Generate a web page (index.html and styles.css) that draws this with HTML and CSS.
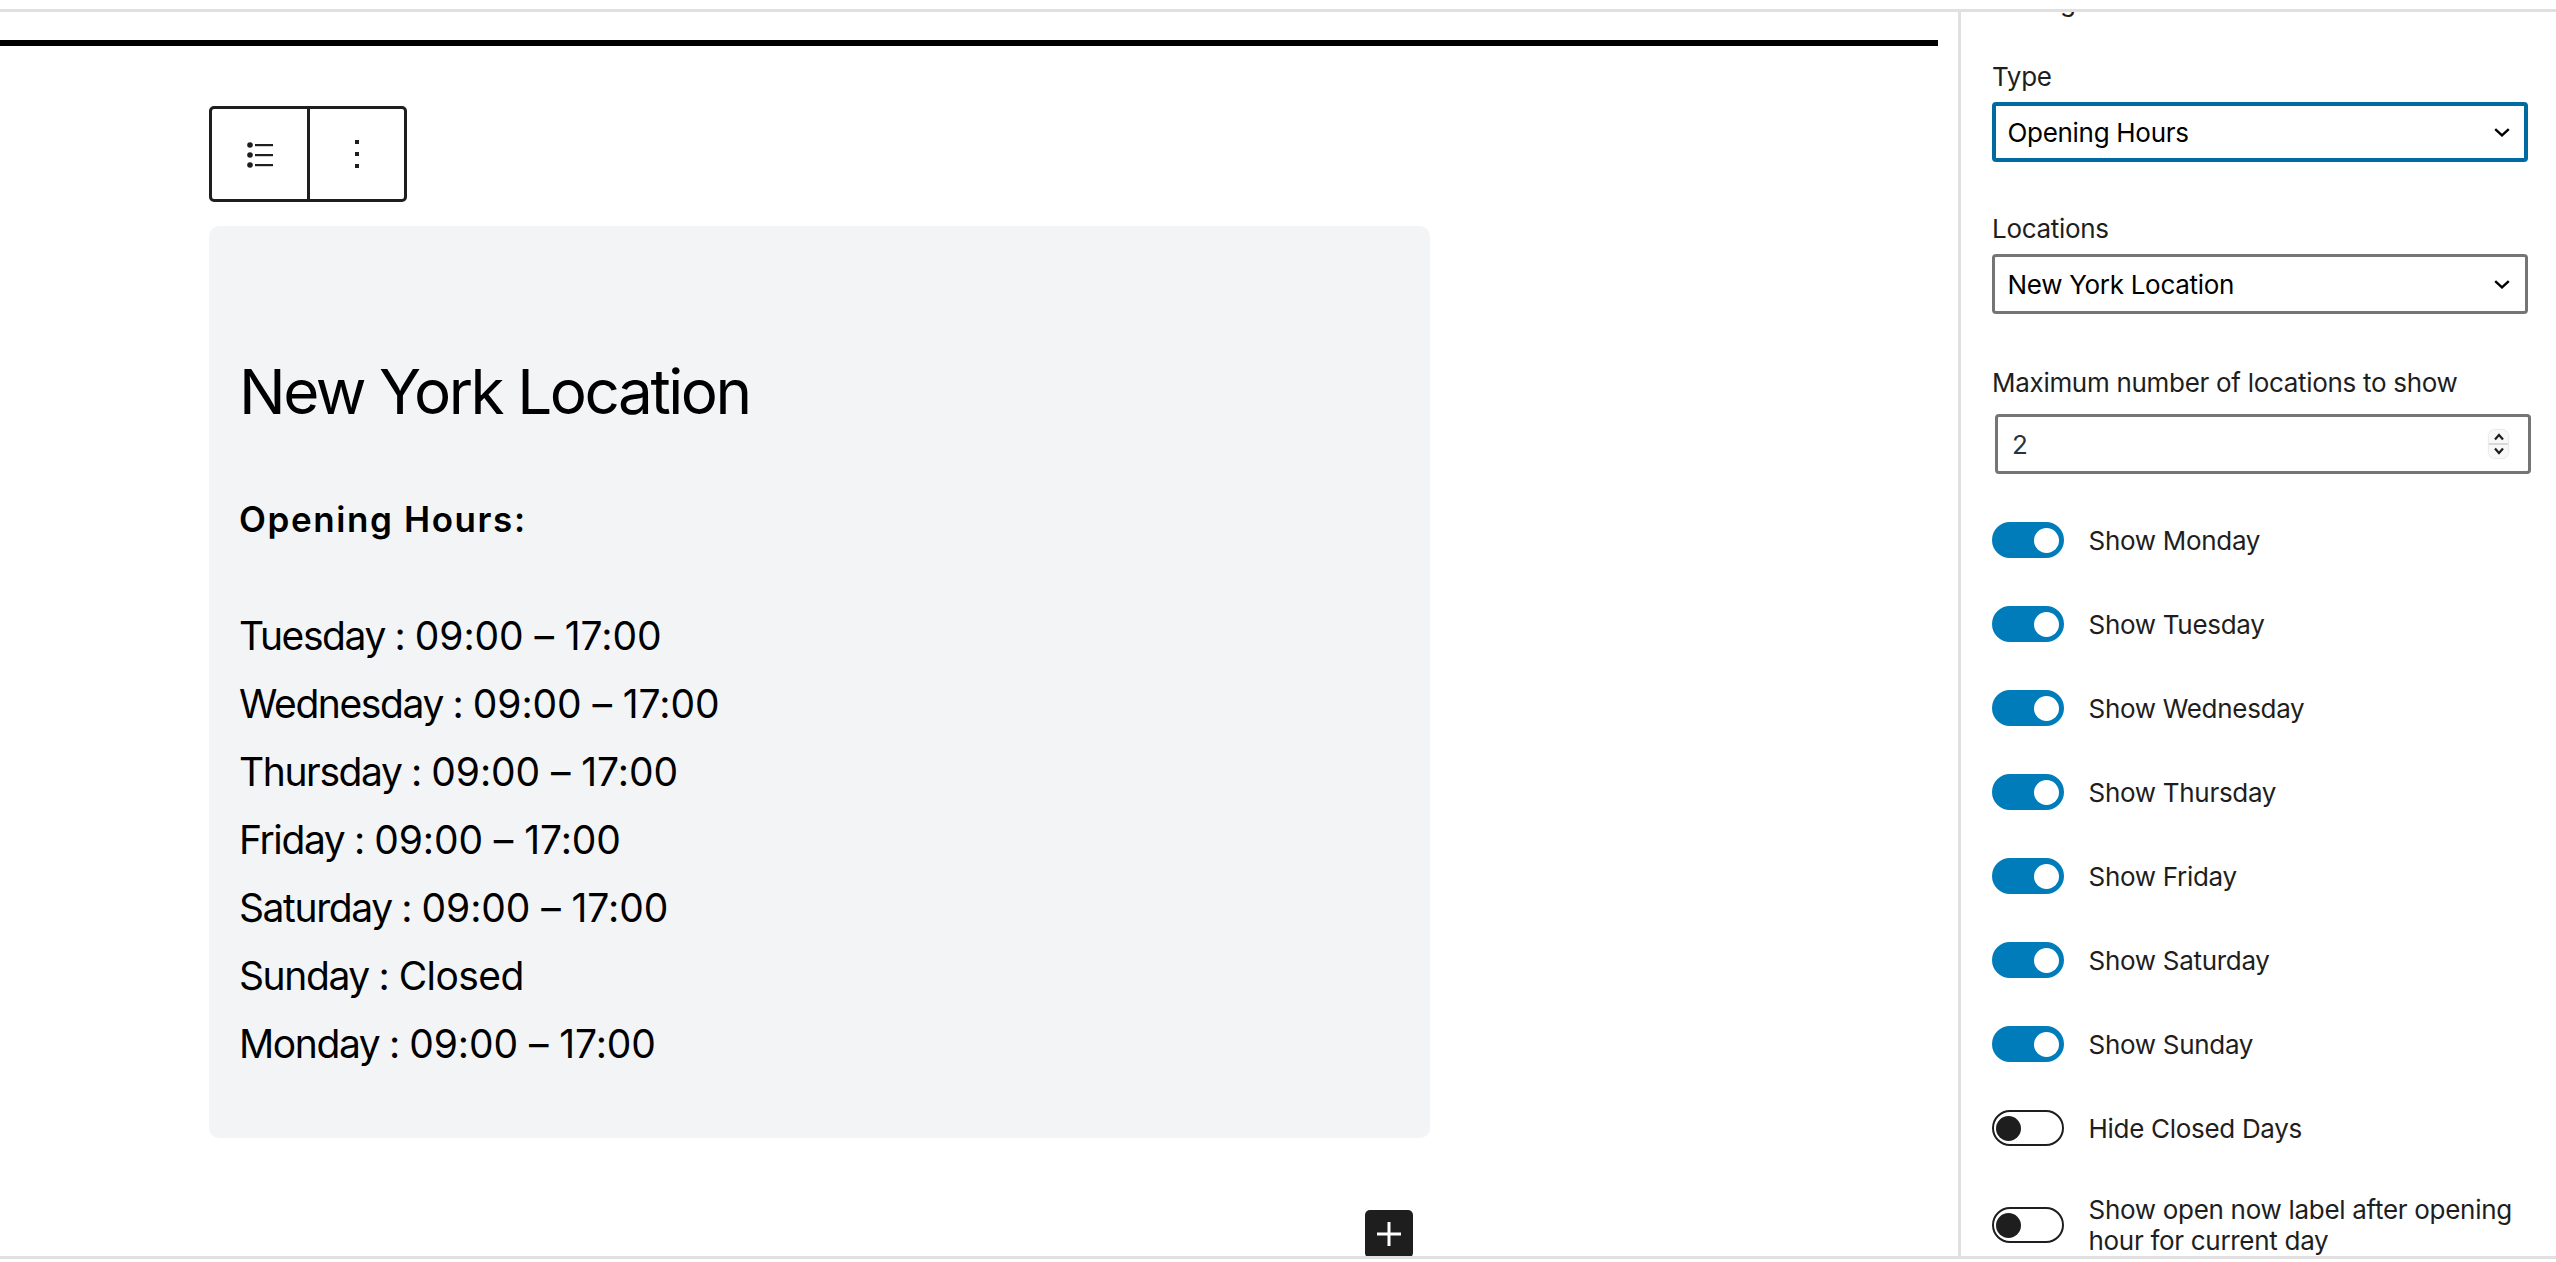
FILE: index.html
```html
<!DOCTYPE html>
<html lang="en">
<head>
<meta charset="utf-8">
<title>Opening Hours block</title>
<link rel="stylesheet" href="styles.css">
</head>
<body>
<div class="app">
  <div class="top-rule"></div>
  <div class="workspace">
    <main class="canvas">
      <div class="canvas-bar"></div>
      <div class="toolbar">
        <button class="tool-btn" type="button" aria-label="List">
          <svg class="tool-icon" viewBox="0 0 48 48"><circle cx="15" cy="15" r="2.8"/><circle cx="15" cy="25" r="2.8"/><circle cx="15" cy="35" r="2.8"/><rect x="20" y="14" width="18" height="2.2"/><rect x="20" y="24" width="18" height="2.2"/><rect x="20" y="34" width="18" height="2.2"/></svg>
        </button>
        <button class="tool-btn" type="button" aria-label="Options">
          <svg class="tool-icon" viewBox="0 0 48 48"><rect x="22" y="10" width="4" height="4"/><rect x="22" y="22" width="4" height="4"/><rect x="22" y="34" width="4" height="4"/></svg>
        </button>
      </div>
      <section class="hours-card">
        <h2 class="hours-title">New York Location</h2>
        <h4 class="hours-sub">Opening Hours:</h4>
        <ul class="hours-list">
          <li><span class="day">Tuesday :</span> <span class="time">09:00 – 17:00</span></li>
          <li><span class="day">Wednesday :</span> <span class="time">09:00 – 17:00</span></li>
          <li><span class="day">Thursday :</span> <span class="time">09:00 – 17:00</span></li>
          <li><span class="day">Friday :</span> <span class="time">09:00 – 17:00</span></li>
          <li><span class="day">Saturday :</span> <span class="time">09:00 – 17:00</span></li>
          <li><span class="day">Sunday :</span> Closed</li>
          <li><span class="day">Monday :</span> <span class="time">09:00 – 17:00</span></li>
        </ul>
      </section>
      <button class="add-btn" type="button" aria-label="Add block">
        <svg class="add-icon" viewBox="0 0 48 48"><rect x="12" y="22.5" width="24" height="3"/><rect x="22.5" y="12" width="3" height="24"/></svg>
      </button>
    </main>
    <aside class="sidebar">
      <div class="side-head">Settings</div>
      <div class="field">
        <div class="field-label">Type</div>
        <div class="select select-focus"><span>Opening Hours</span>
          <svg class="chevron" viewBox="0 0 16 9"><path d="M1.2 1.2L8 7.4l6.8-6.2"/></svg></div>
      </div>
      <div class="field">
        <div class="field-label">Locations</div>
        <div class="select"><span>New York Location</span>
          <svg class="chevron" viewBox="0 0 16 9"><path d="M1.2 1.2L8 7.4l6.8-6.2"/></svg></div>
      </div>
      <div class="field">
        <div class="field-label field-label-num">Maximum number of locations to show</div>
        <div class="select number"><span>2</span>
          <div class="spinner">
            <svg class="spin-arrow" viewBox="0 0 12 8"><path d="M2 6.5l4-4.5 4 4.5"/></svg>
            <svg class="spin-arrow" viewBox="0 0 12 8"><path d="M2 1.5l4 4.5 4-4.5"/></svg>
          </div>
        </div>
      </div>
      <div class="toggles">
        <div class="toggle-row"><span class="toggle on"><i></i></span><span class="toggle-label">Show Monday</span></div>
        <div class="toggle-row"><span class="toggle on"><i></i></span><span class="toggle-label">Show Tuesday</span></div>
        <div class="toggle-row"><span class="toggle on"><i></i></span><span class="toggle-label">Show Wednesday</span></div>
        <div class="toggle-row"><span class="toggle on"><i></i></span><span class="toggle-label">Show Thursday</span></div>
        <div class="toggle-row"><span class="toggle on"><i></i></span><span class="toggle-label">Show Friday</span></div>
        <div class="toggle-row"><span class="toggle on"><i></i></span><span class="toggle-label">Show Saturday</span></div>
        <div class="toggle-row"><span class="toggle on"><i></i></span><span class="toggle-label">Show Sunday</span></div>
        <div class="toggle-row"><span class="toggle"><i></i></span><span class="toggle-label">Hide Closed Days</span></div>
        <div class="toggle-row"><span class="toggle"><i></i></span><span class="toggle-label">Show open now label after opening hour for current day</span></div>
      </div>
    </aside>
  </div>
  <div class="bottom-rule"></div>
</div>
</body>
</html>
```
FILE: styles.css
```css
* { box-sizing: border-box; }
html, body { margin: 0; padding: 0; background: #fff; }
body { font-family: Inter, "Noto Sans", sans-serif; color: #1e1e1e; }
.app { width: 2556px; height: 1262px; display: flex; flex-direction: column; overflow: hidden; background: #fff; }
.top-rule { height: 12px; flex: none; border-bottom: 3px solid #e0e0e0; }
.bottom-rule { height: 6px; flex: none; border-top: 3px solid #e0e0e0; }
.workspace { flex: 1; min-height: 0; display: flex; overflow: hidden; }

.canvas { width: 1958px; flex: none; display: flex; flex-direction: column; padding-top: 28px; overflow: hidden; }
.canvas-bar { height: 6px; flex: none; margin-right: 20px; background: #000; }
.toolbar { flex: none; display: flex; width: 198px; height: 96px; margin: 60px 0 0 209px; border: 3px solid #1e1e1e; border-radius: 5px; background: #fff; }
.tool-btn { flex: 1; display: flex; align-items: center; justify-content: center; padding: 0; border: 0; background: none; }
.tool-btn + .tool-btn { border-left: 3px solid #1e1e1e; }
.tool-icon { width: 48px; height: 48px; fill: #1e1e1e; }

.hours-card { flex: none; width: 1221px; height: 912px; margin: 24px 0 0 209px; padding: 127px 30px 0; background: #f3f4f6; border-radius: 10px; color: #000; }
.hours-title { margin: 0; font-size: 62px; line-height: 78px; font-weight: 400; letter-spacing: -2.45px; }
.hours-sub { margin: 66px 0 0; font-size: 35px; line-height: 44px; font-weight: 600; letter-spacing: 1.6px; color: #000; }
.hours-list { list-style: none; margin: 61px 0 0; padding: 0; font-size: 39px; line-height: 68px; letter-spacing: -0.58px; }
.day { letter-spacing: -1.4px; }
.time { letter-spacing: -0.08px; }

.add-btn { flex: none; width: 48px; height: 48px; margin: 72px 0 0 1365px; padding: 0; border: 0; border-radius: 5px; background: #1e1e1e; display: flex; }
.add-icon { width: 48px; height: 48px; fill: #fff; }

.sidebar { flex: 1; min-width: 0; border-left: 3px solid #e0e0e0; padding: 0 28px 0 31px; overflow: hidden; font-size: 26px; letter-spacing: -0.3px; }
.side-head { height: 36px; line-height: 36px; margin-top: -28px; margin-bottom: 39px; }
.field { margin-bottom: 49px; }
.field-label { height: 36px; line-height: 36px; margin-bottom: 7px; }
.field-label-num { margin-top: 51px; margin-bottom: 13px; }
.select { height: 60px; display: flex; align-items: center; justify-content: space-between; padding: 0 10px 0 12.5px; border: 3px solid #757575; border-radius: 4px; background: #fff; color: #000; }
.select-focus { border: 4px solid #006ba1; padding: 0 9px 0 11.5px; }
.chevron { width: 16px; height: 9px; margin-right: 5px; fill: none; stroke: #000; stroke-width: 2.4; }
.number { margin: 0 -3px 0 3px; padding-left: 14px; color: #2c3338; }
.spinner { width: 19px; height: 28px; margin-right: 10px; display: flex; flex-direction: column; align-items: center; justify-content: space-between; border-radius: 6px; background: linear-gradient(#f8f8f8 46%, #d8d8d8 46%, #d8d8d8 54%, #f8f8f8 54%); box-shadow: 0 0 2px rgba(0,0,0,.3); padding: 3px 0; }
.spin-arrow { width: 12px; height: 8px; fill: none; stroke: #1e1e1e; stroke-width: 2.2; }

.toggles { display: flex; flex-direction: column; gap: 48px; margin-top: -1px; }
.toggle-row { display: flex; align-items: center; gap: 24.5px; }
.toggle { flex: none; width: 72px; height: 36px; display: flex; align-items: center; padding: 0 2px; border: 2px solid #1e1e1e; border-radius: 18px; background: #fff; }
.toggle i { display: block; width: 25px; height: 25px; border-radius: 50%; background: #1e1e1e; }
.toggle.on { background: #007cba; border-color: #007cba; justify-content: flex-end; padding: 0 3px; }
.toggle.on i { background: #fff; }
.toggle-label { line-height: 31px; }
```
